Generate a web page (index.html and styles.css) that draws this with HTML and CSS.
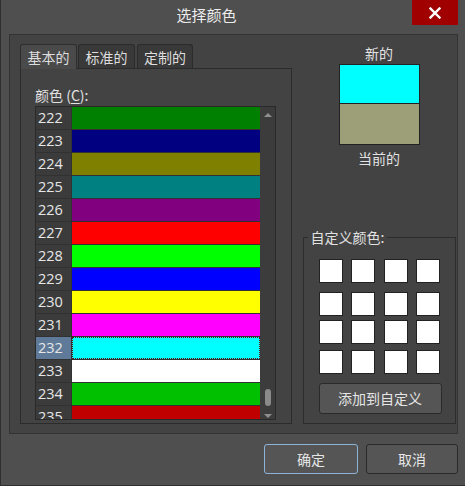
FILE: index.html
```html
<!DOCTYPE html>
<html lang="zh">
<head>
<meta charset="utf-8">
<title>选择颜色</title>
<link rel="stylesheet" href="styles.css">
</head>
<body>
<div class="window">
  <div class="titlebar">
    <div class="title">选择颜色</div>
    <div class="close">
      <svg width="12" height="12" viewBox="0 0 12 12"><path d="M1.5 1.5 L10.5 10.5 M10.5 1.5 L1.5 10.5" stroke="#fff" stroke-width="2.4" stroke-linecap="square"/></svg>
    </div>
  </div>
  <div class="panel">
    <div class="left">
      <div class="tabs">
        <div class="tab active">基本的</div>
        <div class="tab">标准的</div>
        <div class="tab">定制的</div>
      </div>
      <div class="pane">
        <div class="label">颜色 (<u>C</u>):</div>
        <div class="list">
          <div class="rows">
            <div class="row"><span class="num">222</span><span class="sw" style="background:#008000"></span></div>
            <div class="row"><span class="num">223</span><span class="sw" style="background:#000080"></span></div>
            <div class="row"><span class="num">224</span><span class="sw" style="background:#808000"></span></div>
            <div class="row"><span class="num">225</span><span class="sw" style="background:#008080"></span></div>
            <div class="row"><span class="num">226</span><span class="sw" style="background:#800080"></span></div>
            <div class="row"><span class="num">227</span><span class="sw" style="background:#ff0000"></span></div>
            <div class="row"><span class="num">228</span><span class="sw" style="background:#00ff00"></span></div>
            <div class="row"><span class="num">229</span><span class="sw" style="background:#0000ff"></span></div>
            <div class="row"><span class="num">230</span><span class="sw" style="background:#ffff00"></span></div>
            <div class="row"><span class="num">231</span><span class="sw" style="background:#ff00ff"></span></div>
            <div class="row selected"><span class="num">232</span><span class="sw focus" style="background:#00ffff"></span></div>
            <div class="row"><span class="num">233</span><span class="sw" style="background:#ffffff"></span></div>
            <div class="row"><span class="num">234</span><span class="sw" style="background:#00c000"></span></div>
            <div class="row"><span class="num">235</span><span class="sw" style="background:#c00000"></span></div>
          </div>
          <div class="scrollbar">
            <div class="arrow up"></div>
            <div class="track"><div class="thumb"></div></div>
            <div class="arrow down"></div>
          </div>
        </div>
      </div>
    </div>
    <div class="right">
      <div class="cap new">新的</div>
      <div class="preview">
        <div class="pv-new"></div>
        <div class="pv-cur"></div>
      </div>
      <div class="cap cur">当前的</div>
      <div class="group">
        <span class="legend">自定义颜色:</span>
        <div class="grid">
          <span></span><span></span><span></span><span></span>
          <span></span><span></span><span></span><span></span>
          <span></span><span></span><span></span><span></span>
          <span></span><span></span><span></span><span></span>
        </div>
        <div class="btn add">添加到自定义</div>
      </div>
    </div>
  </div>
  <div class="footer">
    <div class="btn ok">确定</div>
    <div class="btn cancel">取消</div>
  </div>
</div>
</body>
</html>
```
FILE: styles.css
```css
* { box-sizing: border-box; }
html, body { margin: 0; padding: 0; background: #4f4f4f; }
body {
  font-family: "Noto Sans CJK SC", "Noto Sans", sans-serif;
  color: #e2e2e2;
  font-size: 14px;
}
.window {
  width: 465px;
  height: 486px;
  background: #4f4f4f;
  border-left: 1px solid #2f2f2f;
  border-bottom: 1px solid #2f2f2f;
  display: flex;
  flex-direction: column;
}
.titlebar {
  height: 34px;
  flex: none;
  display: flex;
  align-items: flex-start;
}
.title {
  flex: 1;
  text-align: center;
  font-size: 15px;
  line-height: 30px;
  color: #ececec;
}
.close {
  width: 46px;
  height: 25px;
  background: #a00000;
  margin-right: 7px;
  display: flex;
  align-items: center;
  justify-content: center;
}
.panel {
  margin-left: 8px;
  width: 449px;
  height: 400px;
  flex: none;
  background: #434343;
  border: 1px solid #333333;
  padding: 9px 1px 9px 10px;
  display: flex;
  gap: 10px;
}
.left {
  width: 272px;
  min-height: 0;
  display: flex;
  flex-direction: column;
}
.tabs {
  display: flex;
  height: 24px;
  flex: none;
  gap: 1px;
  position: relative;
  z-index: 1;
}
.tab {
  width: 57px;
  height: 24px;
  background: #393939;
  border: 1px solid #2b2b2b;
  border-bottom: none;
  border-radius: 3px 3px 0 0;
  text-align: center;
  line-height: 24px;
  font-size: 14px;
  color: #dedede;
}
.tab.active {
  background: #4a4a4a;
  height: 25px;
  border-color: #2e2e2e;
}
.tab:nth-child(3) { margin-left: 1px; width: 56px; }
.pane {
  flex: 1;
  min-height: 0;
  border: 1px solid #2b2b2b;
  background: #434343;
  padding: 13px 15px 3px 14px;
  display: flex;
  flex-direction: column;
}
.label {
  height: 24px;
  flex: none;
  line-height: 26px;
  font-size: 14px;
  color: #e2e2e2;
}
.label u { text-underline-offset: 2px; }
.list {
  flex: 1;
  min-height: 0;
  border: 1px solid #2a2a2a;
  display: flex;
  overflow: hidden;
  background: #3a3a3a;
}
.rows {
  width: 224px;
  overflow: hidden;
}
.row {
  height: 23px;
  display: flex;
  border-bottom: 1px solid #313131;
}
.num {
  width: 36px;
  background: #3b3b3b;
  border-right: 1px solid #313131;
  font-family: "Open Sans", "Noto Sans", sans-serif;
  font-size: 14.5px;
  line-height: 22px;
  padding-left: 2px;
  color: #e6e6e6;
}
.row.selected .num { background: #5f7a99; }
.sw { flex: 1; }
.sw.focus { border: 1px dotted #6a1010; }
.scrollbar {
  width: 15px;
  background: #3c3c3c;
  display: flex;
  flex-direction: column;
  align-items: center;
}
.arrow { width: 0; height: 0; border-left: 4px solid transparent; border-right: 4px solid transparent; }
.arrow.up { border-bottom: 4px solid #8f8f8f; margin-top: 6px; }
.arrow.down { border-top: 4px solid #8f8f8f; margin-bottom: 1px; }
.track { flex: 1; width: 100%; display: flex; flex-direction: column; align-items: center; justify-content: flex-end; }
.thumb { width: 6px; height: 17px; border-radius: 3px; background: #8a8a8a; margin-bottom: 8px; }
.right {
  flex: 1;
  display: flex;
  flex-direction: column;
  align-items: center;
}
.cap {
  line-height: 20px;
  font-size: 14px;
  color: #e2e2e2;
}
.cap.new { margin-top: -1px; }
.preview {
  width: 81px;
  height: 81px;
  border: 1px solid #222;
  margin-top: 1px;
  display: flex;
  flex-direction: column;
}
.pv-new { height: 39px; background: #00ffff; border-bottom: 1px solid #222; }
.pv-cur { flex: 1; background: #9d9f79; }
.cap.cur { margin-top: 3px; }
.group {
  margin-top: auto;
  width: 153px;
  height: 187px;
  border: 1px solid #2c2c2c;
  position: relative;
  padding: 21px 0 0 15px;
}
.legend {
  position: absolute;
  top: -11px;
  left: 4px;
  padding: 0 3px;
  background: #434343;
  font-size: 14px;
  line-height: 20px;
  color: #e2e2e2;
}
.grid {
  display: grid;
  grid-template-columns: repeat(4, 24px);
  grid-template-rows: 33px 28px 30px 24px;
  column-gap: 8.67px;
  align-items: start;
}
.grid span {
  width: 24px;
  height: 24px;
  background: #fff;
  border: 1px solid #222;
}
.btn {
  background: #555555;
  border: 1px solid #2a2a2a;
  border-radius: 3px;
  text-align: center;
  font-size: 14px;
  color: #e6e6e6;
}
.btn.add {
  width: 123px;
  height: 31px;
  line-height: 29px;
  margin-top: 9px;
}
.footer {
  display: flex;
  justify-content: flex-end;
  gap: 8px;
  margin-top: 10px;
  padding-right: 7px;
}
.btn.ok, .btn.cancel {
  height: 30px;
  line-height: 28px;
}
.btn.ok { width: 94px; border-color: #8db4d8; }
.btn.cancel { width: 92px; }
```
